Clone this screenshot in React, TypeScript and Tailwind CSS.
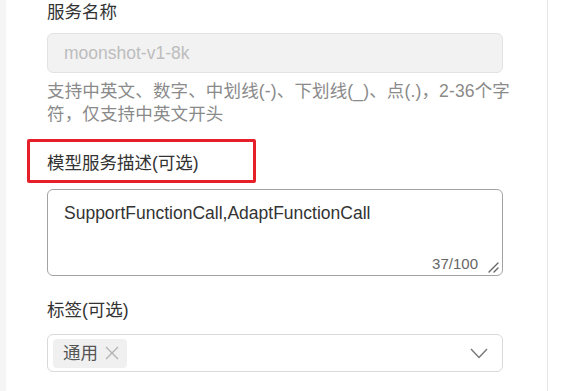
export default function App() {
  return (
    <div
      className="flex h-[391px] w-[573px] overflow-hidden bg-white text-[17.5px] text-[#333]"
      style={{ fontFamily: '"Liberation Sans", "Noto Sans CJK SC", sans-serif' }}
    >
      <div className="w-[6px] shrink-0 bg-[#f5f5f5]" />
      <div className="w-[542px] shrink-0 border-r border-[#e6e6e6] pl-[41px]">
        <div className="flex w-[456px] flex-col">
          <label className="leading-[24px] text-[#333]">服务名称</label>
          <div className="mt-[9px] flex h-[40px] items-center rounded-[6px] border border-[#e3e3e3] bg-[#f2f2f2] px-[16px] text-[#bdbdbd]">
            moonshot-v1-8k
          </div>
          <p className="mt-[7px] whitespace-nowrap leading-[23px] tracking-[0.15px] text-[#8a8a8a]">
            支持中英文、数字、中划线(-)、下划线(_)、点(.)，2-36个字
            <br />
            符，仅支持中英文开头
          </p>

          <div className="relative mt-[24px]">
            <label className="leading-[24px] text-[#333]">模型服务描述(可选)</label>
            <div className="absolute left-[-20px] top-[-11px] h-[44px] w-[229px] rounded-[2px] border-[3px] border-[#e5202a]" />
          </div>
          <div className="relative mt-[13px] h-[87px] rounded-[6px] border border-[#a3a3a3] px-[16px] pt-[11px] leading-[24px] text-[#333]">
            SupportFunctionCall,AdaptFunctionCall
            <span className="absolute bottom-[1px] right-[24px] text-[15px] leading-[20px] text-[#666]">37/100</span>
            <svg className="absolute bottom-[2px] right-[3px]" width="12" height="12" viewBox="0 0 12 12">
              <path d="M2 11L11 2M7 11L11 7" stroke="#666" strokeWidth="1.4" strokeLinecap="round" />
            </svg>
          </div>

          <label className="mt-[22px] leading-[24px] text-[#333]">标签(可选)</label>
          <div className="mt-[12px] flex h-[38px] items-center justify-between rounded-[6px] border border-[#d9d9d9] pl-[5px] pr-[14px]">
            <span className="flex h-[29px] items-center gap-[7px] rounded-[4px] bg-[#f0f0f0] pl-[10px] pr-[8px] text-[#555]">
              通用
              <svg width="14" height="14" viewBox="0 0 14 14">
                <path d="M1 1L13 13M13 1L1 13" stroke="#b0b0b0" strokeWidth="1.2" />
              </svg>
            </span>
            <svg width="18" height="11" viewBox="0 0 18 11">
              <path d="M1 1L9 9.5L17 1" fill="none" stroke="#777" strokeWidth="1.4" />
            </svg>
          </div>
        </div>
      </div>
    </div>
  )
}
